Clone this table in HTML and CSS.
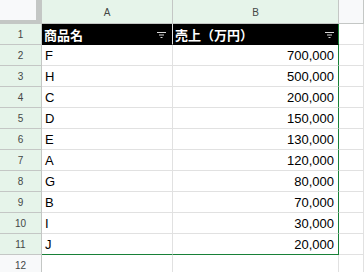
FILE: index.html
```html
<!DOCTYPE html>
<html lang="ja">
<head>
<meta charset="utf-8">
<link rel="stylesheet" href="styles.css">
</head>
<body>
<div class="sheet">
  <div class="corner"></div>
  <div class="colhead sel">A</div>
  <div class="colhead sel colb">B</div>
  <div class="colhead">&nbsp;</div>

  <div class="rowhead sel">1</div>
  <div class="cell head"><span>商品名</span><svg class="filter" width="9" height="6" viewBox="0 0 9 6"><path d="M0 0.5H9M2 3H7M3.5 5.5H5.5" stroke="#d8d8d8" stroke-width="1"/></svg></div>
  <div class="cell head colb"><span>売上（万円）</span><svg class="filter" width="9" height="6" viewBox="0 0 9 6"><path d="M0 0.5H9M2 3H7M3.5 5.5H5.5" stroke="#d8d8d8" stroke-width="1"/></svg></div>
  <div class="cell"></div>

  <div class="rowhead sel">2</div><div class="cell">F</div><div class="cell num colb">700,000</div><div class="cell"></div>
  <div class="rowhead sel">3</div><div class="cell">H</div><div class="cell num colb">500,000</div><div class="cell"></div>
  <div class="rowhead sel">4</div><div class="cell">C</div><div class="cell num colb">200,000</div><div class="cell"></div>
  <div class="rowhead sel">5</div><div class="cell">D</div><div class="cell num colb">150,000</div><div class="cell"></div>
  <div class="rowhead sel">6</div><div class="cell">E</div><div class="cell num colb">130,000</div><div class="cell"></div>
  <div class="rowhead sel">7</div><div class="cell">A</div><div class="cell num colb">120,000</div><div class="cell"></div>
  <div class="rowhead sel">8</div><div class="cell">G</div><div class="cell num colb">80,000</div><div class="cell"></div>
  <div class="rowhead sel">9</div><div class="cell">B</div><div class="cell num colb">70,000</div><div class="cell"></div>
  <div class="rowhead sel">10</div><div class="cell">I</div><div class="cell num colb">30,000</div><div class="cell"></div>
  <div class="rowhead sel last">11</div><div class="cell last">J</div><div class="cell num colb last">20,000</div><div class="cell"></div>
  <div class="rowhead">12</div><div class="cell"></div><div class="cell"></div><div class="cell"></div>
</div>
</body>
</html>
```
FILE: styles.css
```css
* { box-sizing: border-box; }
html, body { margin: 0; padding: 0; background: #ffffff; overflow: hidden; }
.sheet {
  display: grid;
  grid-template-columns: 42px 131px 166px 1fr;
  grid-template-rows: 24px repeat(12, 21px);
  width: 364px;
  font-family: "Liberation Sans", Arial, "Noto Sans CJK JP", sans-serif;
}
.corner {
  background: #f8f9fa;
  box-shadow: inset -5px -4px 0 #c4c7c5;
  border-right: 1px solid #c4c7c5;
}
.colhead {
  background: #f8f9fa;
  border-right: 1px solid #c4c7c5;
  border-bottom: 1px solid #c4c7c5;
  display: flex;
  align-items: center;
  justify-content: center;
  font-size: 10px;
  color: #444746;
  padding-top: 1px;
}
.rowhead {
  background: #f8f9fa;
  border-right: 1px solid #c4c7c5;
  border-bottom: 1px solid #c4c7c5;
  display: flex;
  align-items: center;
  justify-content: center;
  font-size: 10px;
  color: #444746;
}
.sel { background: #e6f4ea; }
.cell {
  border-right: 1px solid #e1e1e1;
  border-bottom: 1px solid #e1e1e1;
  display: flex;
  align-items: center;
  padding: 0 3px;
  font-size: 13px;
  color: #000000;
  white-space: nowrap;
}
.cell.head {
  background: #000000;
  color: #ffffff;
  font-weight: bold;
  font-family: "Noto Sans CJK JP", sans-serif;
  font-size: 13px;
  justify-content: space-between;
  padding: 0 6px 0 2px;
  border-bottom-color: #000000;
}
.cell.head.colb { padding-right: 4px; }
.filter { display: block; margin-top: 1px; }
.num { justify-content: flex-end; padding-right: 4px; }
.colb.cell { border-right-color: #188038; }
.cell.last { border-bottom-color: #188038; }
```
